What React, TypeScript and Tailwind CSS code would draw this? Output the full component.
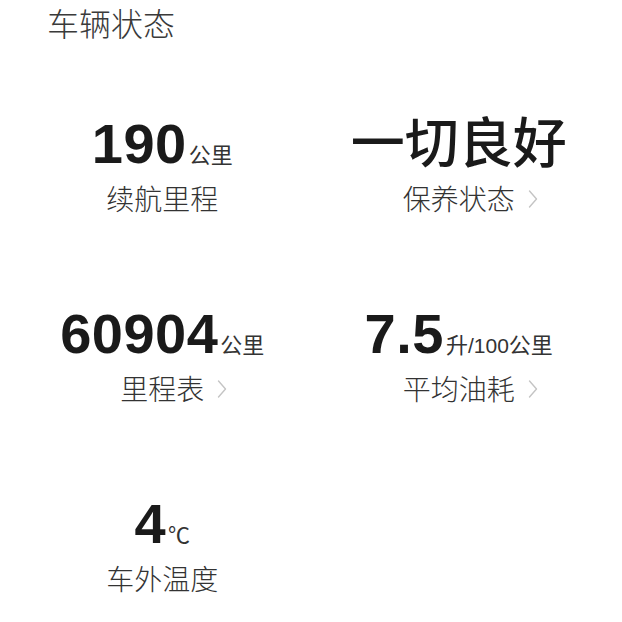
import React from "react";

function Chevron() {
  return (
    <svg
      className="absolute left-full top-1/2 -translate-y-1/2 ml-[13px] mt-[1px]"
      width="10"
      height="19"
      viewBox="0 0 10 19"
      fill="none"
    >
      <polyline points="1.5,1.5 8.5,9.5 1.5,17.5" stroke="#c4c4c4" strokeWidth="1.4" strokeLinecap="round" strokeLinejoin="round" />
    </svg>
  );
}

type Cell = {
  value: React.ReactNode;
  label: string;
  arrow?: boolean;
  cjkValue?: boolean;
};

function Stat({ value, label, arrow, cjkValue }: Cell) {
  return (
    <div className="flex flex-col items-center">
      <div
        className={
          cjkValue
            ? "h-[56px] -mt-[3px] mb-[3px] flex items-baseline justify-center leading-none"
            : "h-[56px] flex items-baseline justify-center leading-none"
        }
      >
        {value}
      </div>
      <div className="mt-3">
        <span className="relative text-[28px] leading-none font-light text-[#333333] font-['Noto_Sans_CJK_SC','Noto_Sans',sans-serif]">
          {label}
          {arrow && <Chevron />}
        </span>
      </div>
    </div>
  );
}

function Num({ children }: { children: React.ReactNode }) {
  return (
    <span className="text-[56px] font-bold leading-none tracking-[0.5px] text-[#1a1a1a] font-['Liberation_Sans',Arial,'Noto_Sans_CJK_SC',sans-serif]">
      {children}
    </span>
  );
}

function Unit({ children }: { children: React.ReactNode }) {
  return (
    <span className="ml-[2px] text-[22px] leading-none text-[#333333] font-['Noto_Sans_CJK_SC','Noto_Sans',sans-serif]">
      {children}
    </span>
  );
}

export default function App() {
  return (
    <div className="w-[622px] h-[622px] bg-white overflow-hidden">
      <div className="pt-[6px] pl-[47px] text-[32px] leading-none font-light text-[#3a3a3a] font-['Noto_Sans_CJK_SC','Noto_Sans',sans-serif]">
        车辆状态
      </div>
      <div className="mt-[78px] grid grid-cols-2 gap-y-[90px] pl-[14px] pr-[15px]">
        <Stat
          value={
            <>
              <Num>190</Num>
              <Unit>公里</Unit>
            </>
          }
          label="续航里程"
        />
        <Stat
          cjkValue
          value={
            <span className="text-[54px] leading-none font-medium text-[#1a1a1a] font-['Noto_Sans_CJK_SC','Noto_Sans',sans-serif]">
              一切良好
            </span>
          }
          label="保养状态"
          arrow
        />
        <Stat
          value={
            <>
              <Num>60904</Num>
              <Unit>公里</Unit>
            </>
          }
          label="里程表"
          arrow
        />
        <Stat
          value={
            <>
              <Num>7.5</Num>
              <Unit>
                升
                <span className="text-[21px] font-['Liberation_Sans',Arial,sans-serif]">/100</span>
                公里
              </Unit>
            </>
          }
          label="平均油耗"
          arrow
        />
        <Stat
          value={
            <>
              <Num>4</Num>
              <Unit>℃</Unit>
            </>
          }
          label="车外温度"
        />
        <div />
      </div>
    </div>
  );
}
